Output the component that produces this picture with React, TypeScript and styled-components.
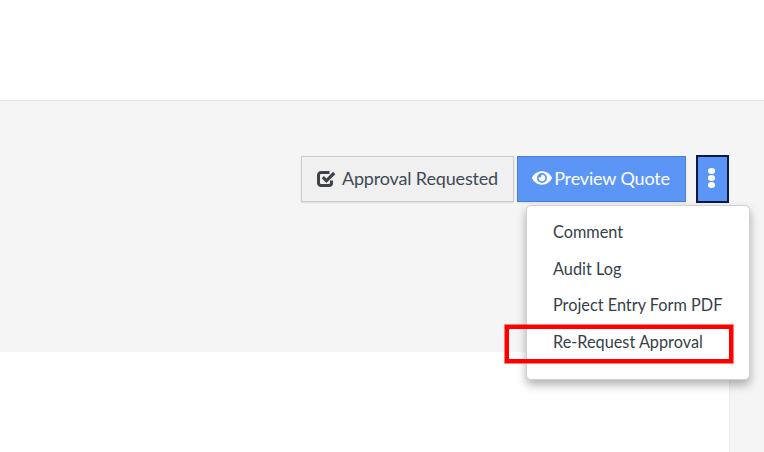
import { createGlobalStyle, styled } from "styled-components";
import { FaEye } from "react-icons/fa";

const GlobalStyle = createGlobalStyle`
  html, body {
    margin: 0;
    padding: 0;
    height: 100%;
    background: #fff;
    overflow: hidden;
    font-family: Lato, "Open Sans", sans-serif;
  }
`;

const Page = styled.div`
  width: 764px;
  height: 452px;
  display: grid;
  grid-template-rows: 100px 252px 100px;
`;

const TopBar = styled.header`
  background: #fff;
`;

const Band = styled.section`
  background: #f5f5f5;
  border-top: 1px solid #e6e6e6;
  padding: 54px 35px 0 0;
  display: flex;
  justify-content: flex-end;
  align-items: flex-start;
  box-sizing: border-box;
  height: 252px;
`;

const Actions = styled.div`
  position: relative;
  display: flex;
  align-items: center;
`;

const Button = styled.button<{ $primary?: boolean }>`
  height: 46px;
  box-sizing: border-box;
  display: flex;
  align-items: center;
  justify-content: center;
  font-family: inherit;
  font-size: 18px;
  letter-spacing: -0.16px;
  padding: 0 ${(p) => (p.$primary ? "1px" : "0")} 2px 0;
  width: ${(p) => (p.$primary ? "169px" : "213px")};
  margin-left: ${(p) => (p.$primary ? "3px" : "0")};
  gap: ${(p) => (p.$primary ? "2px" : "6px")};
  background: ${(p) => (p.$primary ? "#5b96f7" : "#f0f0f0")};
  color: ${(p) => (p.$primary ? "#fff" : "#404a55")};
  border: 1px solid ${(p) => (p.$primary ? "#4c82c9" : "#cccccc")};
  box-shadow: 0 1px 2px rgba(0, 0, 0, 0.1);
`;

const MenuToggle = styled.button`
  width: 33px;
  height: 48px;
  margin-left: 10px;
  box-sizing: border-box;
  padding: 0 2px 2px 0;
  background: #5b96f7;
  border: 2px solid #0a1a44;
  display: flex;
  flex-direction: column;
  align-items: center;
  justify-content: center;
  gap: 1.5px;
`;

const Dot = styled.span`
  width: 7px;
  height: 5.5px;
  border-radius: 50%;
  background: #fff;
`;

const Menu = styled.ul`
  position: absolute;
  top: 50px;
  right: -21px;
  width: 224px;
  height: 175px;
  box-sizing: border-box;
  margin: 0;
  padding: 8px 0 0;
  list-style: none;
  background: #fff;
  border: 1px solid #d0d0d0;
  border-radius: 5px;
  box-shadow: 0 5px 10px rgba(0, 0, 0, 0.3);
`;

const MenuItem = styled.li`
  height: 36.6px;
  line-height: 36.6px;
  padding-left: 26px;
  font-size: 16.3px;
  color: #373f48;
`;

const Highlight = styled.div`
  position: absolute;
  top: 170px;
  right: -4px;
  width: 228px;
  height: 38px;
  box-sizing: border-box;
  border: 4px solid #ff0000;
  outline: 1px solid rgba(255, 0, 0, 0.5);
`;

const Bottom = styled.section`
  display: flex;
  justify-content: flex-end;
  background: #fff;
`;

const SideRail = styled.aside`
  width: 35px;
  background: #f5f5f5;
  border-left: 1px solid #ececec;
  box-sizing: border-box;
`;

const CheckIcon = () => (
  <svg width="19" height="17" viewBox="0 0 19 17" aria-hidden="true">
    <path
      d="M14.5 10.5V13a2.5 2.5 0 0 1-2.5 2.5H4A2.5 2.5 0 0 1 1.5 13V5A2.5 2.5 0 0 1 4 2.5h8.5"
      fill="none"
      stroke="#3f4348"
      strokeWidth="3"
    />
    <path
      d="M5.8 7.2l3.6 3.6L17.2 3"
      fill="none"
      stroke="#3f4348"
      strokeWidth="3.2"
    />
  </svg>
);

const App = () => {
  return (
    <>
      <GlobalStyle />
      <Page>
        <TopBar />
        <Band>
          <Actions>
            <Button>
              <CheckIcon />
              Approval Requested
            </Button>
            <Button $primary>
              <FaEye size={20} />
              Preview Quote
            </Button>
            <MenuToggle>
              <Dot />
              <Dot />
              <Dot />
            </MenuToggle>
            <Menu>
              <MenuItem>Comment</MenuItem>
              <MenuItem>Audit Log</MenuItem>
              <MenuItem>Project Entry Form PDF</MenuItem>
              <MenuItem>Re-Request Approval</MenuItem>
            </Menu>
            <Highlight />
          </Actions>
        </Band>
        <Bottom>
          <SideRail />
        </Bottom>
      </Page>
    </>
  );
};

export default App;
